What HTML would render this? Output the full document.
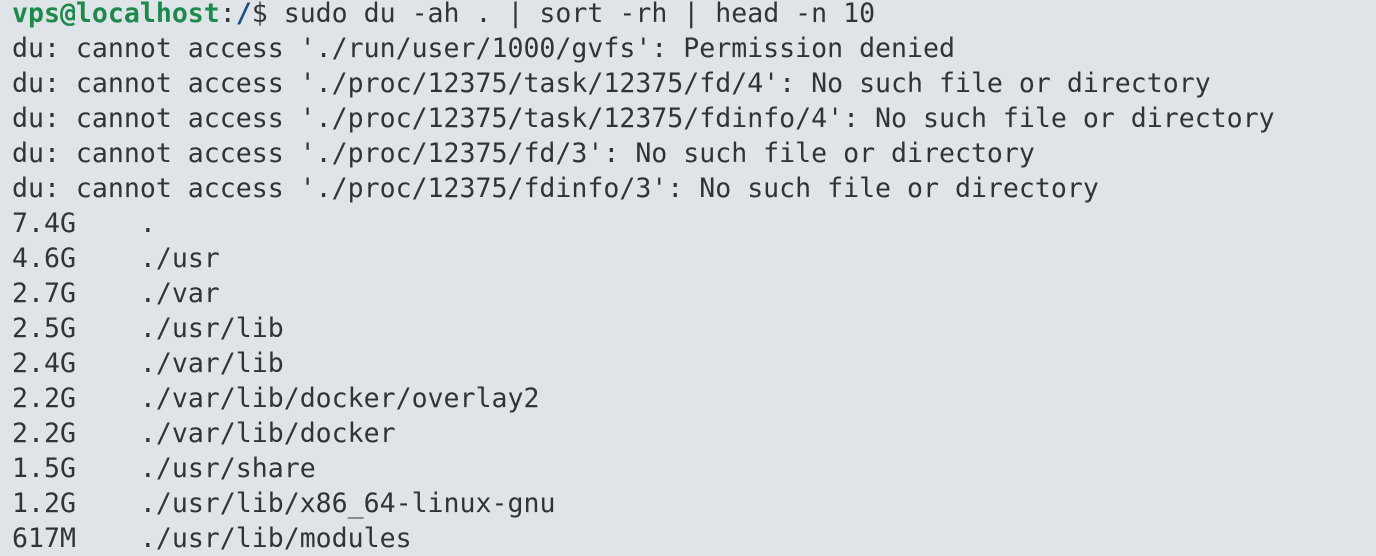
<!DOCTYPE html>
<html><head><style>
html,body{margin:0;padding:0;background:#dfe4e8;width:1376px;height:553px;overflow:hidden}
pre{margin:0;position:absolute;left:12px;top:-4px;font-family:"DejaVu Sans Mono","Liberation Mono",monospace;font-size:26.55px;line-height:35px;color:#303436;white-space:pre}
.g{color:#1d8a4c;font-weight:bold}.b{color:#1d4d7c;font-weight:bold}
</style></head><body>
<pre><span class="g">vps@localhost</span>:<span class="b">/</span>$ sudo du -ah . | sort -rh | head -n 10
du: cannot access './run/user/1000/gvfs': Permission denied
du: cannot access './proc/12375/task/12375/fd/4': No such file or directory
du: cannot access './proc/12375/task/12375/fdinfo/4': No such file or directory
du: cannot access './proc/12375/fd/3': No such file or directory
du: cannot access './proc/12375/fdinfo/3': No such file or directory
7.4G	.
4.6G	./usr
2.7G	./var
2.5G	./usr/lib
2.4G	./var/lib
2.2G	./var/lib/docker/overlay2
2.2G	./var/lib/docker
1.5G	./usr/share
1.2G	./usr/lib/x86_64-linux-gnu
617M	./usr/lib/modules</pre>
</body></html>
